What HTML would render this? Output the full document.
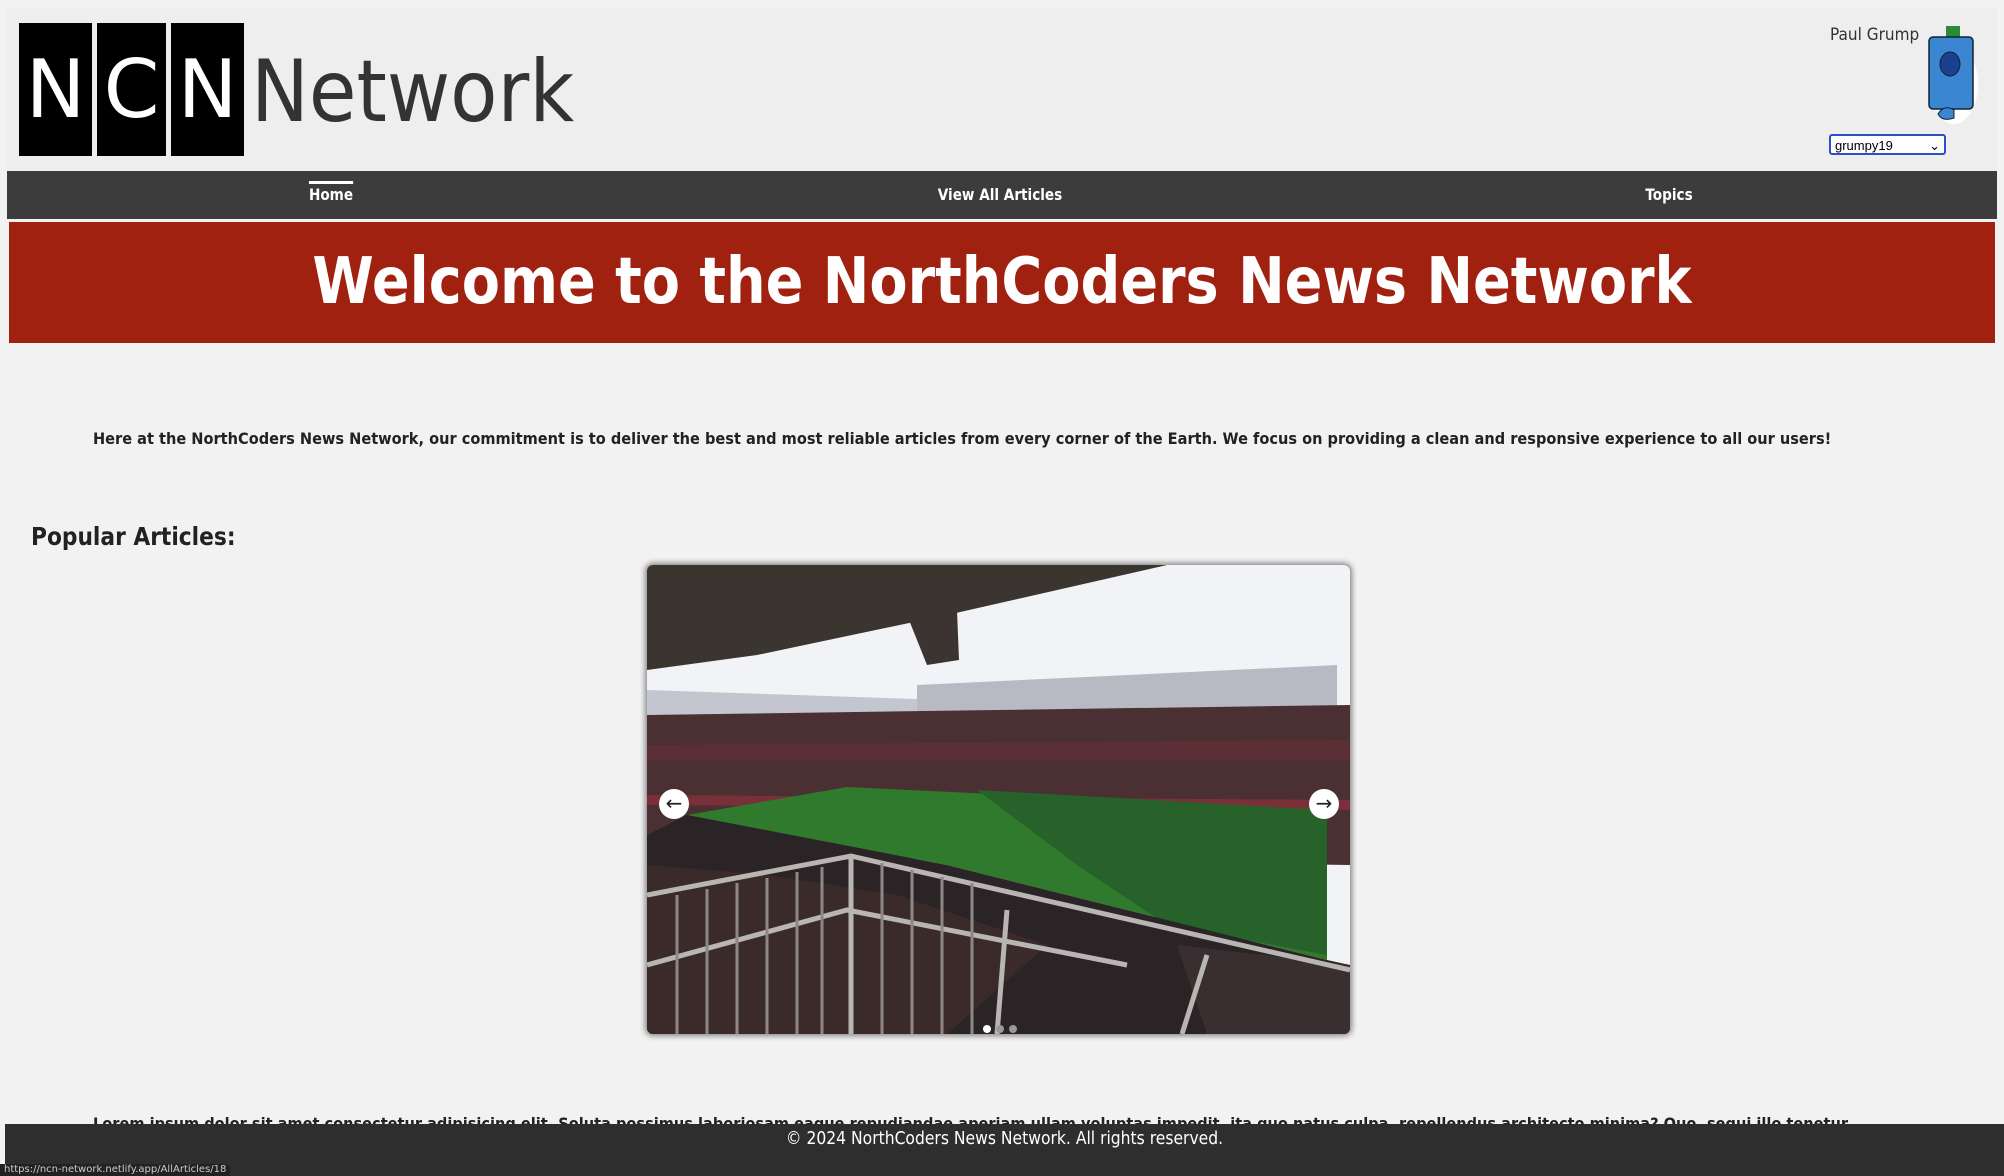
<!DOCTYPE html>
<html><head><meta charset="utf-8"><style>
*{margin:0;padding:0;box-sizing:border-box}
body{width:2004px;height:1176px;background:#f2f2f2;font-family:"DejaVu Sans","Liberation Sans",sans-serif;position:relative;overflow:hidden;color:#222}
.hdr{position:absolute;left:7px;top:8px;width:1990px;height:163px;background:#eee}
.box{position:absolute;top:23px;height:133px;background:#000;color:#fff;font-size:80px;line-height:133px;text-align:center}
.net{position:absolute;left:251px;top:28px;font-size:86px;color:#333;line-height:128px;transform:scaleX(.9);transform-origin:left}
.nav{position:absolute;left:7px;top:171px;width:1990px;height:48px;background:#3c3c3c;color:#fff;font-size:16px;font-weight:bold}
.nav span{position:absolute;top:14px;transform:translateX(-50%) scaleX(.85)}
.banner{position:absolute;left:9px;top:222px;width:1986px;height:121px;background:#a0210f;color:#fff;text-align:center;line-height:121px}
.banner div{font-size:64px;font-weight:bold;transform:scaleX(.87);white-space:nowrap}
.sx{transform-origin:left;white-space:nowrap}
.p{position:absolute;left:93px;top:429px;font-size:16px;font-weight:bold;transform:scaleX(.91)}
.pop{position:absolute;left:31px;top:522px;font-size:25px;font-weight:bold;transform:scaleX(.87)}
.card{position:absolute;left:647px;top:565px;width:703px;height:469px;border-radius:6px;box-shadow:0 0 6px 2px rgba(0,0,0,.45);overflow:hidden;background:#222}
.arr{position:absolute;top:224px;width:30px;height:30px;border-radius:50%;background:#fff;font-size:20px;line-height:29px;text-align:center;color:#222}
.foot{position:absolute;left:5px;top:1124px;width:1999px;height:52px;background:#2e2e2e;color:#fff;text-align:center;line-height:30px}
.foot div{font-size:18px;transform:scaleX(.865)}
</style></head><body>
<div class="hdr"></div>
<div class="box" style="left:19px;width:73px">N</div>
<div class="box" style="left:97px;width:69px">C</div>
<div class="box" style="left:171px;width:73px">N</div>
<div class="net">Network</div>
<div class="sx" style="position:absolute;left:1830px;top:25px;font-size:17px;color:#333;transform:scaleX(.9)">Paul Grump</div>
<svg style="position:absolute;left:1924px;top:22px" width="56" height="104" viewBox="0 0 56 104">
<ellipse cx="30" cy="62" rx="24" ry="40" fill="#fff"/>
<rect x="22" y="4" width="14" height="12" fill="#2a8a3a"/>
<rect x="5" y="15" width="44" height="72" rx="4" fill="#3b86d0" stroke="#123" stroke-width="1.5"/>
<ellipse cx="26" cy="42" rx="10" ry="12" fill="#1c3f8f" stroke="#123"/>
<path d="M14 92 q6-10 16-4 l0 8 q-12 4-16-4z" fill="#3b86d0" stroke="#123"/>
</svg>
<div style="position:absolute;left:1829px;top:134px;width:117px;height:21px;border:2px solid #2a4fc8;border-radius:3px;background:#fff;font:13px 'Liberation Sans',sans-serif;padding:2px 4px;color:#000">grumpy19<span style="float:right">⌄</span></div>
<div class="nav">
<span style="left:324px;border-top:3px solid #fff;padding-top:1px;top:10px">Home</span>
<span style="left:993px">View All Articles</span>
<span style="left:1662px">Topics</span>
</div>
<div class="banner"><div>Welcome to the NorthCoders News Network</div></div>
<div class="p sx">Here at the NorthCoders News Network, our commitment is to deliver the best and most reliable articles from every corner of the Earth. We focus on providing a clean and responsive experience to all our users!</div>
<div class="pop sx">Popular Articles:</div>
<div class="card">
<svg width="703" height="469" viewBox="0 0 703 469">
<rect width="703" height="469" fill="#f2f3f6"/>
<polygon points="0,0 520,0 300,50 110,90 0,105" fill="#3a362f"/>
<polygon points="262,55 310,45 312,95 280,100" fill="#3b3430"/>
<polygon points="0,125 300,135 300,150 0,155" fill="#c3c6ce"/>
<polygon points="270,120 690,100 690,150 270,150" fill="#b7bac2"/>
<polygon points="0,150 703,140 703,300 0,290" fill="#4a2f33"/>
<polygon points="0,180 703,175 703,195 0,195" fill="#5a3035"/>
<polygon points="0,230 703,235 703,245 0,240" fill="#7a3038"/>
<polygon points="40,250 200,222 680,245 680,395 300,300" fill="#2f7a2c"/>
<polygon points="330,225 680,245 680,390 520,360 430,300" fill="#27622a"/>
<polygon points="0,270 40,250 300,300 680,395 703,400 703,469 0,469" fill="#2b2426"/>
<polygon points="0,300 120,310 250,330 400,380 300,469 0,469" fill="#3a2b2a"/>
<polygon points="530,380 703,400 703,469 560,469" fill="#3a2f30"/>
<g stroke="#b9b5b3" stroke-width="5" fill="none">
<path d="M0 330 L204 291 L703 405"/><path d="M204 291 L204 469"/>
<path d="M0 400 L200 345 L480 400"/><path d="M360 345 L350 469"/>
<path d="M560 390 L535 469"/>
</g>
<g stroke="#8d8885" stroke-width="3">
<path d="M30 330V469M60 324V469M90 318V469M120 313V469M150 307V469M175 302V469M235 298V469M265 305V469M295 312V469M325 318V469"/>
</g>
<g fill="#fff"><circle cx="340" cy="464" r="4"/></g><g fill="#999"><circle cx="353" cy="464" r="4"/><circle cx="366" cy="464" r="4"/></g>
</svg>
<div class="arr" style="left:12px">←</div>
<div class="arr" style="left:662px">→</div>
</div>
<div class="sx" style="position:absolute;left:93px;top:1114px;font-size:16px;font-weight:bold;transform:scaleX(.91)">Lorem ipsum dolor sit amet consectetur adipisicing elit. Soluta possimus laboriosam eaque repudiandae aperiam ullam voluptas impedit, ita quo natus culpa, repellendus architecto minima? Quo, sequi illo tenetur.</div>
<div class="foot"><div>© 2024 NorthCoders News Network. All rights reserved.</div></div>
<div style="position:absolute;left:0;top:1164px;height:12px;background:#222;color:#ccc;font-size:10px;line-height:12px;padding:0 4px;border-radius:0 4px 0 0">https://ncn-network.netlify.app/AllArticles/18</div>
</body></html>
